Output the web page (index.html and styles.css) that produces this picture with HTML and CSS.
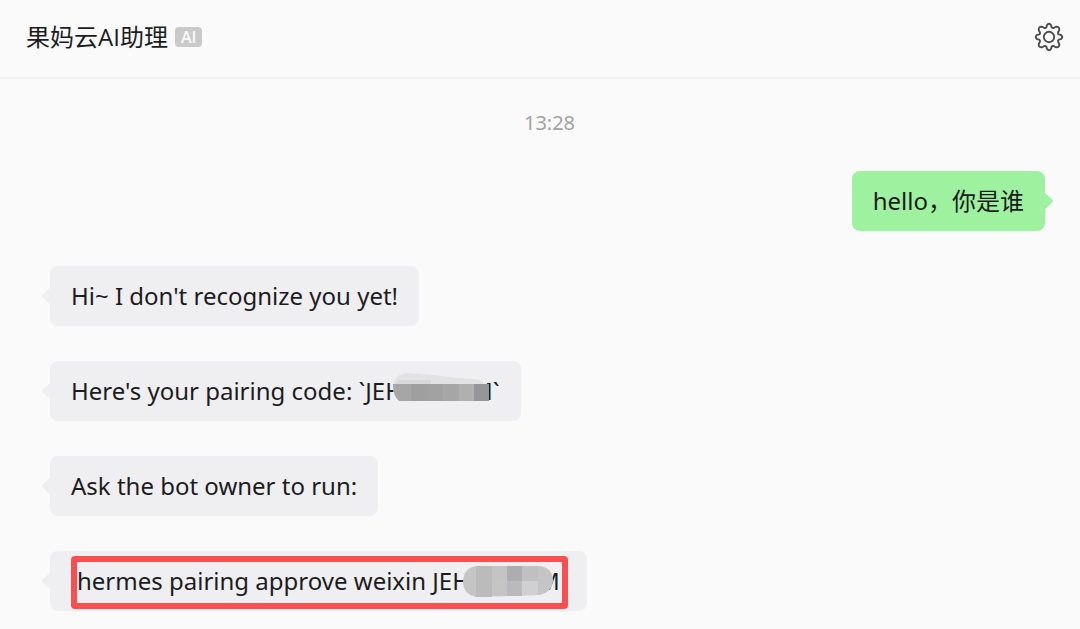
FILE: index.html
```html
<!DOCTYPE html>
<html lang="zh-CN">
<head>
<meta charset="utf-8">
<meta name="viewport" content="width=device-width, initial-scale=1">
<title>果妈云AI助理</title>
<link rel="stylesheet" href="styles.css">
</head>
<body>
<header class="header">
  <h1 class="title">果妈云AI助理</h1>
  <span class="badge">AI</span>
  <button class="settings" type="button" aria-label="设置">
    <svg viewBox="0 0 30 30" width="30" height="30" fill="none" stroke="#4c4c4c" stroke-width="1.9" stroke-linejoin="round">
      <path d="M12.9 3.2Q15 .2 17.1 3.2L17.6 5.2Q18.5 6.5 20 5.8L21.900 4.700Q25.600 4.400 25.300 8.100L24.200 10Q23.500 11.500 24.800 12.400L26.800 12.900Q29.800 15 26.800 17.100L24.800 17.600Q23.500 18.500 24.200 20L25.300 21.900Q25.600 25.600 21.900 25.300L20 24.200Q18.500 23.500 17.600 24.800L17.100 26.800Q15 29.800 12.900 26.800L12.400 24.800Q11.500 23.500 10 24.200L8.100 25.300Q4.400 25.600 4.700 21.900L5.800 20Q6.500 18.500 5.200 17.600L3.200 17.100Q.2 15 3.200 12.900L5.200 12.400Q6.500 11.500 5.800 10L4.700 8.100Q4.400 4.400 8.100 4.700L10 5.800Q11.500 6.500 12.400 5.200Z"/>
      <circle cx="15" cy="15" r="5.200"/>
    </svg>
  </button>
</header>
<main class="chat">
  <time class="time">13:28</time>
  <div class="bubble sent">hello，你是谁</div>
  <div class="bubble">Hi~ I don't recognize you yet!</div>
  <div class="bubble">Here's your pairing code: `JEH<span class="hidden-code"><svg class="mosaic" viewBox="0 0 100 36" width="100" height="36" aria-hidden="true">
    <path fill="#e2e2e3" d="M2 14Q4 2 16 1L42 3L66 6L84 7Q92 8 93 13L97 16V29H12Q2 29 2 14Z"/>
    <path fill="#d8d8d9" d="M8 8H40V13H3Z"/>
    <path fill="#a6a6a7" d="M2 12H98V29H8Q2 24 2 12Z"/>
    <path fill="#9f9fa0" d="M20 12h16v17H20z"/>
    <path fill="#a2a2a3" d="M36 12h16v17H36z"/>
    <path fill="#b0b0b1" d="M68 12h15v17H68z"/>
    <path fill="#969698" d="M83 12h15v17H83z"/>
  </svg></span>M`</div>
  <div class="bubble">Ask the bot owner to run:</div>
  <div class="bubble framed">hermes pairing approve weixin JEH<span class="hidden-code"><svg class="mosaic" viewBox="0 0 100 36" width="100" height="36" aria-hidden="true">
    <g transform="translate(4 3)">
      <path fill="#c5c5c6" d="M14 1H78Q91 3 91 16Q90 27 78 30L14 32Q1 29 1 16Q2 3 14 1Z"/>
      <path fill="#bbbbbc" d="M14 1h16v31H14z"/>
      <path fill="#c4c4c5" d="M30 1h15v15H30z"/>
      <path fill="#adadb0" d="M45 1h15v15H45z"/>
      <path fill="#bababd" d="M45 16h15v15H45z"/>
      <path fill="#c0c0c2" d="M60 1h16v15H60z"/>
      <path fill="#d0d0d2" d="M60 16h16v14H60z"/>
    </g>
  </svg></span>M</div>
</main>
</body>
</html>
```
FILE: styles.css
```css
* {
  box-sizing: border-box;
}

body {
  margin: 0;
  background: #fafafa;
  color: #1c1c1e;
  font-family: "Noto Sans", "Noto Sans CJK SC", sans-serif;
}

.header {
  display: flex;
  align-items: center;
  gap: 7px;
  padding: 20px 16px 23px 26px;
  border-bottom: 2px solid #f0f0f0;
}

.title {
  margin: 0;
  font-family: "Open Sans", "Noto Sans CJK SC", sans-serif;
  font-size: 24px;
  font-weight: 400;
  line-height: 34px;
}

.badge {
  padding: 0 6px;
  border-radius: 4px;
  background: #cacaca;
  color: #fafafa;
  font-family: "Open Sans", sans-serif;
  font-size: 16px;
  font-weight: 600;
  line-height: 20px;
}

.settings {
  display: flex;
  margin-left: auto;
  padding: 0;
  border: 0;
  background: none;
}

.chat {
  display: flex;
  flex-direction: column;
  align-items: flex-start;
  gap: 35px;
  padding: 31px 35px 18px 50px;
}

.time {
  align-self: center;
  margin-left: 4px;
  color: #a2a2a2;
  font-size: 20px;
  line-height: 26px;
}

.bubble {
  position: relative;
  padding: 12px 21px;
  border-radius: 8px;
  background: #efeff1;
  font-size: 24px;
  line-height: 36px;
}

.bubble::before {
  content: "";
  position: absolute;
  top: 21px;
  left: -8px;
  width: 9px;
  height: 18px;
  background: inherit;
  clip-path: polygon(100% 0, 10% 40%, 0 50%, 10% 60%, 100% 100%);
}

.sent {
  align-self: flex-end;
  background: #9ef29f;
}

.sent::before {
  right: -8px;
  left: auto;
  clip-path: polygon(0 0, 90% 40%, 100% 50%, 90% 60%, 0 100%);
}

.hidden-code {
  position: relative;
  display: inline-block;
  width: 68px;
  height: 24px;
  vertical-align: middle;
}

.mosaic {
  position: absolute;
  top: -10px;
  left: -12px;
}

.framed {
  padding: 12px 27px;
}

.framed::after {
  content: "";
  position: absolute;
  inset: 5px 19px 2px 21px;
  border: 6px solid #fb4e50;
  border-radius: 4px;
}
```
